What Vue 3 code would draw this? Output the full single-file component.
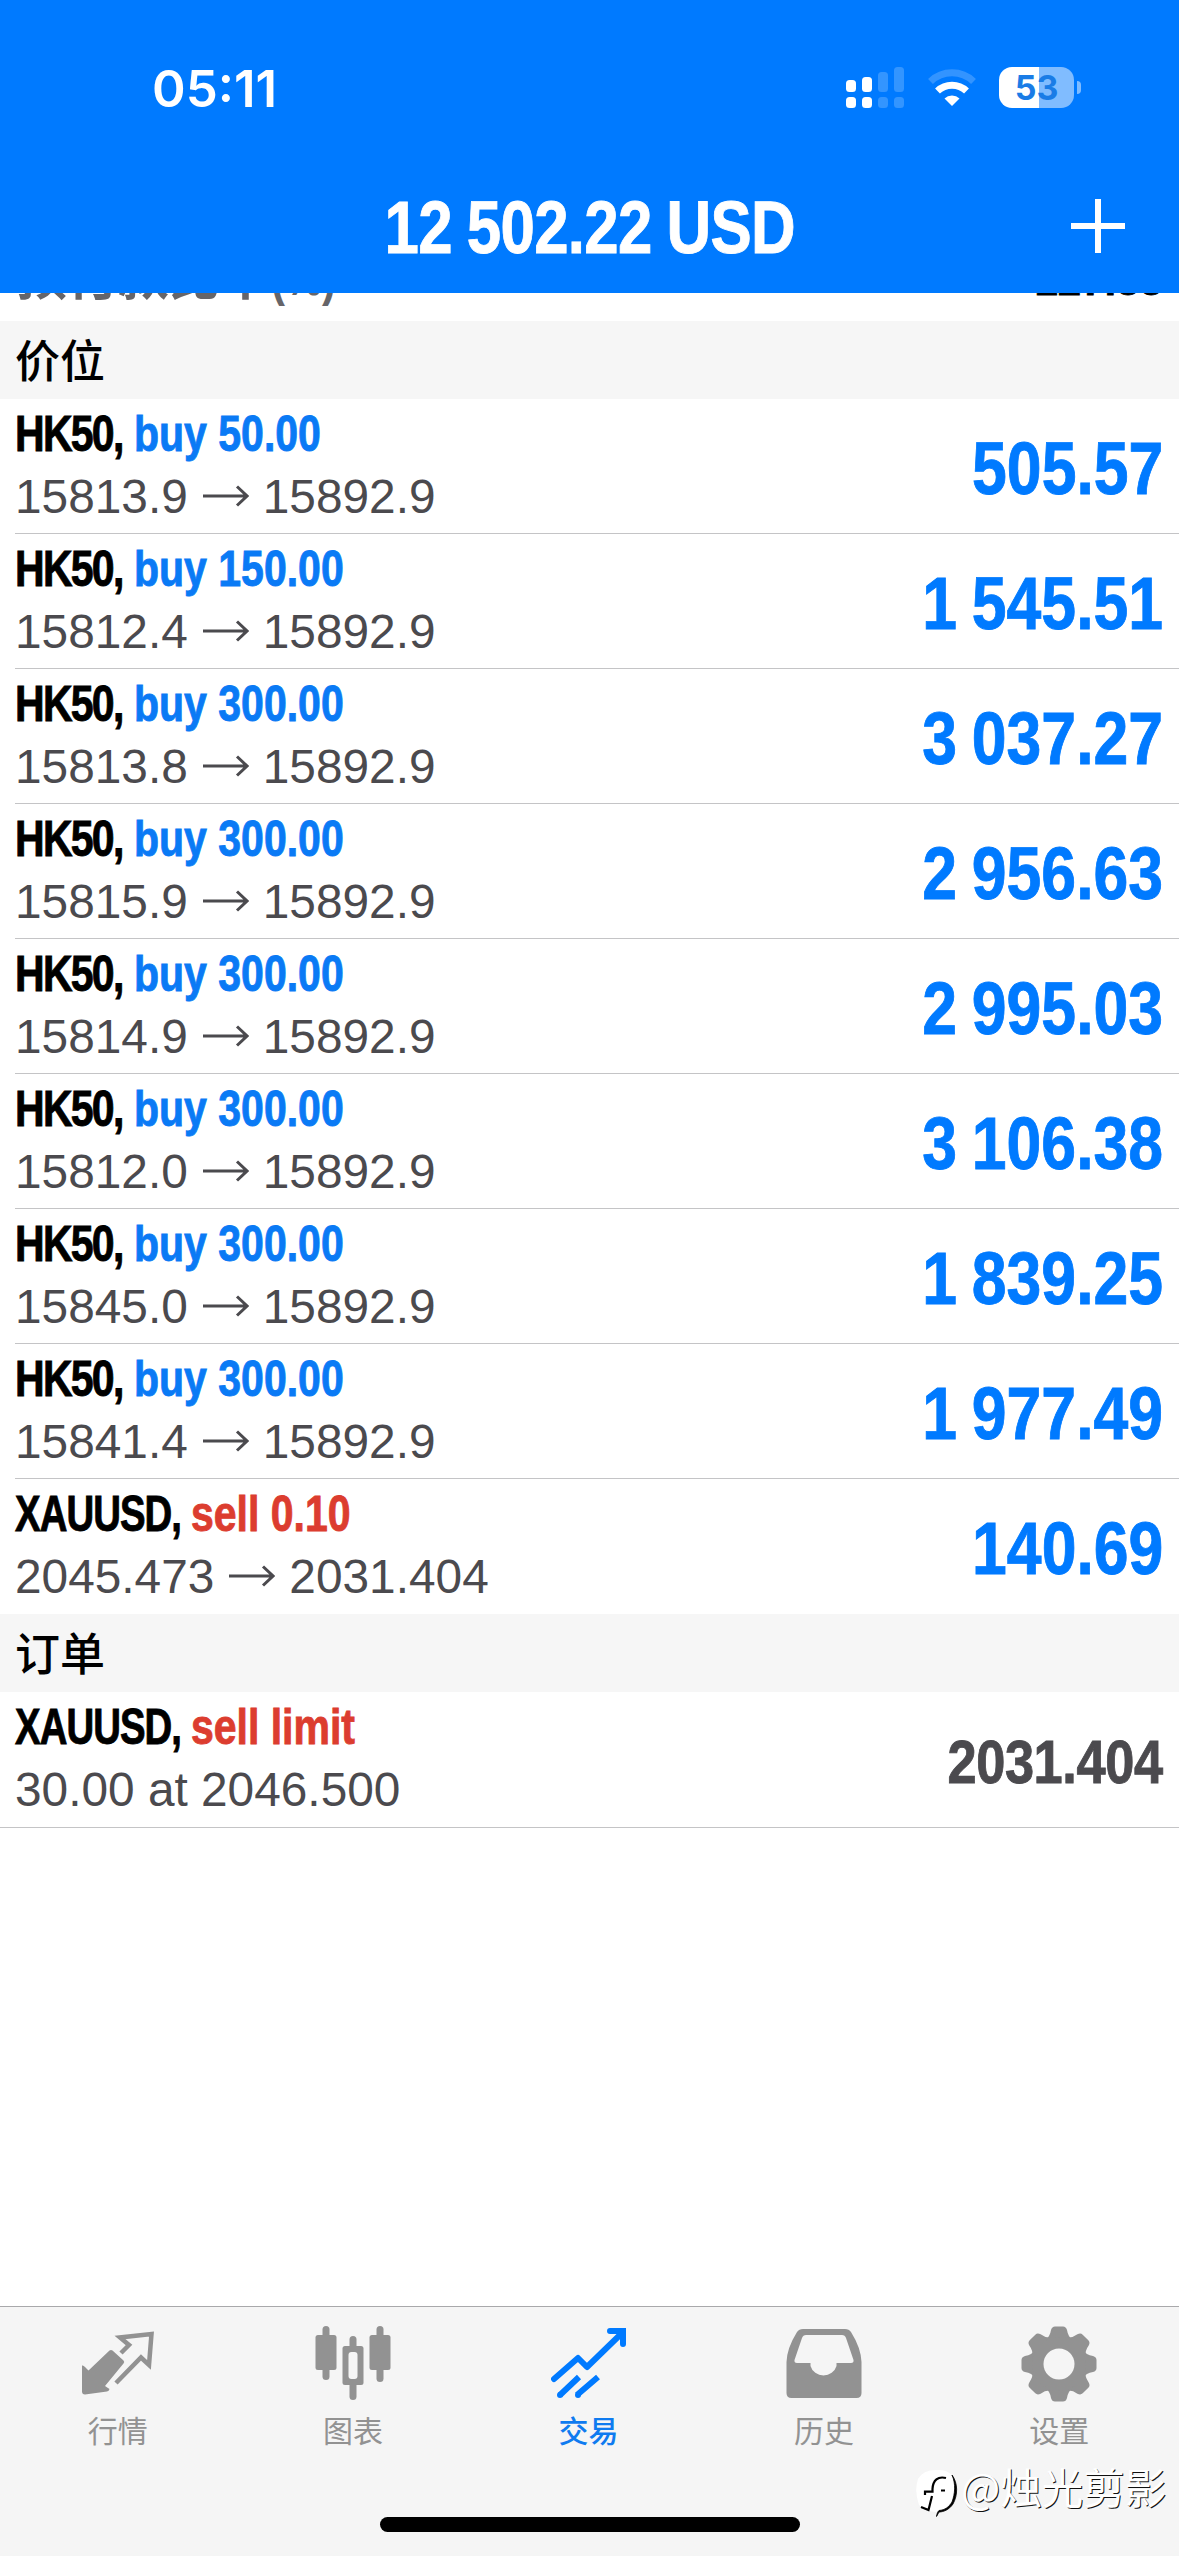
<script setup>
const positions = [
  { symbol: 'HK50,', side: 'buy', label: 'buy 50.00', from: '15813.9', to: '15892.9', value: '505.57' },
  { symbol: 'HK50,', side: 'buy', label: 'buy 150.00', from: '15812.4', to: '15892.9', value: '1 545.51' },
  { symbol: 'HK50,', side: 'buy', label: 'buy 300.00', from: '15813.8', to: '15892.9', value: '3 037.27' },
  { symbol: 'HK50,', side: 'buy', label: 'buy 300.00', from: '15815.9', to: '15892.9', value: '2 956.63' },
  { symbol: 'HK50,', side: 'buy', label: 'buy 300.00', from: '15814.9', to: '15892.9', value: '2 995.03' },
  { symbol: 'HK50,', side: 'buy', label: 'buy 300.00', from: '15812.0', to: '15892.9', value: '3 106.38' },
  { symbol: 'HK50,', side: 'buy', label: 'buy 300.00', from: '15845.0', to: '15892.9', value: '1 839.25' },
  { symbol: 'HK50,', side: 'buy', label: 'buy 300.00', from: '15841.4', to: '15892.9', value: '1 977.49' },
  { symbol: 'XAUUSD,', side: 'sell', label: 'sell 0.10', from: '2045.473', to: '2031.404', value: '140.69' },
]
const teeth = [0, 45, 90, 135, 180, 225, 270, 315]
</script>

<template>
  <div class="screen">
    <header class="header">
      <div class="status">
        <span class="time">05:11</span>
        <div class="indicators">
          <svg class="signal" width="58" height="42" viewBox="0 0 58 42" fill="#fff">
            <rect x="0" y="13" width="10" height="12" rx="3.5" />
            <rect x="0" y="30" width="10" height="11" rx="3.5" />
            <rect x="16" y="10" width="10" height="15" rx="3.5" />
            <rect x="16" y="30" width="10" height="11" rx="3.5" />
            <g opacity=".2">
              <rect x="32" y="5" width="10" height="20" rx="3.5" />
              <rect x="32" y="30" width="10" height="11" rx="3.5" />
              <rect x="48" y="0" width="10" height="25" rx="3.5" />
              <rect x="48" y="30" width="10" height="11" rx="3.5" />
            </g>
          </svg>
          <svg class="wifi" width="50" height="38" viewBox="0 0 50 38">
            <path d="M3.5 13.5A31 31 0 0 1 46.5 13.5" fill="none" stroke="#fff" stroke-width="7" opacity=".2" />
            <path d="M10.5 23A21 21 0 0 1 39.5 23" fill="none" stroke="#fff" stroke-width="7" />
            <path d="M17.5 30.5A11 11 0 0 1 32.5 30.5L25 38Z" fill="#fff" />
          </svg>
          <div class="battery"><span>53</span></div>
          <i class="cap"></i>
        </div>
      </div>
      <div class="nav">
        <h1 class="title cond">12 502.22 USD</h1>
        <svg class="plus" width="54" height="54" viewBox="0 0 54 54"><path d="M0 27H54M27 0V54" stroke="#fff" stroke-width="6" /></svg>
      </div>
    </header>

    <div class="peek">
      <div class="summary">
        <span class="summary-label">预付款比率<b>(%)</b></span>
        <span class="summary-value cond">127.83</span>
      </div>
    </div>

    <h2 class="section">价位</h2>
    <ul class="list">
      <li v-for="(p, i) in positions" :key="i" class="row">
        <div class="info">
          <div class="name cond"><b :class="{ long: p.symbol.length > 5 }">{{ p.symbol }}</b> <span :class="p.side">{{ p.label }}</span></div>
          <div class="detail">
            {{ p.from }}<svg class="arrow" width="46" height="24" viewBox="0 0 46 24"><path d="M0 12H44M34 2.5L44 12L34 21.5" fill="none" stroke="#4b4a4e" stroke-width="3" /></svg>{{ p.to }}
          </div>
        </div>
        <div class="value cond">{{ p.value }}</div>
      </li>
    </ul>

    <h2 class="section">订单</h2>
    <div class="row order">
      <div class="info">
        <div class="name cond"><b class="long">XAUUSD,</b> <span class="sell">sell limit</span></div>
        <div class="detail">30.00 at 2046.500</div>
      </div>
      <div class="value price cond">2031.404</div>
    </div>

    <div class="blank"></div>

    <nav class="tabs">
      <div class="tab">
        <svg width="76" height="76" viewBox="0 0 76 76">
          <path d="M29.5 24.5Q31 23.5 32.5 24.5L43.5 34.5Q45 36 43.5 37.5L25 60L29.5 63Q29 65 27 65.5L5 68.5Q2 68.5 2 65.5V39.5Q3.5 39 5 41L8.5 44.5Z" fill="#929292" />
          <path d="M41 27L49 19L40 11.5L71.5 8L69 39L61 31.5L36 57" fill="none" stroke="#929292" stroke-width="4.5" />
        </svg>
        <span>行情</span>
      </div>
      <div class="tab">
        <svg width="76" height="76" viewBox="0 0 76 76" fill="#929292">
          <rect x="7.5" y="0" width="7" height="54" rx="3.5" />
          <rect x="0.5" y="9" width="21" height="35" rx="2.5" />
          <rect x="34.5" y="10" width="7" height="64" rx="3.5" />
          <rect x="27.5" y="20" width="21" height="39" rx="2.5" />
          <rect x="33.5" y="26" width="9" height="27" rx="3" fill="#f5f5f5" />
          <rect x="61.5" y="0" width="7" height="56" rx="3.5" />
          <rect x="54.5" y="9" width="21" height="35" rx="2.5" />
        </svg>
        <span>图表</span>
      </div>
      <div class="tab active">
        <svg width="76" height="76" viewBox="0 0 76 76" fill="none" stroke="#007aff" stroke-width="6">
          <path d="M3 53L27 32L36 41L71 7" stroke-linecap="round" stroke-linejoin="round" />
          <path d="M59 5H72V18" stroke-linecap="round" />
          <path d="M9 69L28 51M26 69L47 51" />
          <circle cx="9" cy="69" r="3" fill="#007aff" stroke="none" />
          <circle cx="27" cy="69" r="3" fill="#007aff" stroke="none" />
        </svg>
        <span>交易</span>
      </div>
      <div class="tab">
        <svg width="76" height="76" viewBox="0 0 76 76">
          <path fill="#929292" fill-rule="evenodd" d="M17 3H59Q63 3 65 6Q75 22 75.5 36V67Q75.5 72 70.5 72H5.5Q0.5 72 0.5 67V36Q1 22 11 6Q13 3 17 3ZM20 9Q17 9 16 12L8.5 34Q8 37 11 37H24.5V40A13.5 13 0 0 0 50.5 40V37H65Q68 37 67.5 34L60 12Q59 9 56 9Z" />
        </svg>
        <span>历史</span>
      </div>
      <div class="tab">
        <svg width="76" height="76" viewBox="0 0 76 76">
          <g fill="#929292">
            <path v-for="a in teeth" :key="a" d="M24 14Q29 11 30 4Q31 0.5 34 0.5H42Q45 0.5 46 4Q47 11 52 14L44 34H32Z" :transform="`rotate(${a} 38 38)`" />
            <circle cx="38" cy="38" r="27" />
          </g>
          <circle cx="38" cy="38" r="15.5" fill="#f5f5f5" />
        </svg>
        <span>设置</span>
      </div>
      <div class="home"></div>
      <div class="mark">
        <svg width="45" height="50" viewBox="0 0 45 50">
          <path d="M20 1C34 0 41 8 40.5 21C40 34 33 42 20 43Q8 42 3 36Q-2 22 2 10Q7 1 20 1Z" fill="#fff" />
          <path d="M30 9C22 7 17 11 16.5 20V22.6H9V26M16 27L12.5 41L5 38M25 21.5H29" fill="none" stroke="#000" stroke-width="2.2" />
          <path d="M36 6C42 14 42 26 37 35C33 41 27 43 23 43L20.5 47.5C21 44 22 42.5 23 41.5C29 41 33 38 36 33C39 25 40 15 36 6Z" fill="#000" stroke="#000" stroke-width=".8" />
        </svg>
        <span>@烛光剪影</span>
      </div>
    </nav>
  </div>
</template>

<style>
body { margin: 0; }
</style>

<style scoped>
* { box-sizing: border-box; }
.screen {
  width: 1179px; height: 2556px; display: flex; flex-direction: column; overflow: hidden;
  background: #fff; color: #000; font-family: "Liberation Sans", "Noto Sans CJK SC", sans-serif;
}
.cond { font-family: "Liberation Sans", sans-serif; font-weight: 700; white-space: pre; -webkit-text-stroke: 0.9px currentColor; }
.header { height: 293px; background: #007aff; color: #fff; display: flex; flex-direction: column; flex: none; }
.status { height: 160px; display: flex; justify-content: space-between; padding: 0 98px 0 152px; }
.time { font: 600 51px/60px Inter, sans-serif; margin-top: 59px; }
.indicators { display: flex; margin-top: 67px; align-items: flex-start; }
.wifi { margin: 1px 0 0 23px; }
.battery {
  width: 75px; height: 41px; border-radius: 13px; margin-left: 22px;
  background: linear-gradient(90deg, #fff 40px, #80bcff 40px);
  color: #1a7ce6; font: 700 34px/42px Inter, sans-serif; text-align: center;
}
.cap { width: 4px; height: 13px; margin: 14px 0 0 3px; background: #80bcff; border-radius: 0 6px 6px 0; }
.nav { height: 133px; position: relative; display: flex; justify-content: center; }
.title { margin: 26px 0 0; font-size: 74px; line-height: 84px; letter-spacing: -0.8px; word-spacing: -2px; transform: scaleX(.835); }
.plus { position: absolute; right: 54px; top: 39px; }
.peek { height: 28px; overflow: hidden; display: flex; align-items: flex-end; flex: none; }
.summary { width: 100%; height: 73px; display: flex; justify-content: space-between; padding: 0 16px; }
.summary-label { font: 700 51px/60px "Liberation Sans", "Noto Sans CJK SC", sans-serif; color: #666569; }
.summary-label b { display: inline-block; transform: scaleX(.82); transform-origin: left; }
.summary-value { font-size: 50px; line-height: 60px; transform: scaleX(.84); transform-origin: right; }
.section {
  height: 78px; flex: none; margin: 0; padding-left: 15px; background: #f6f6f6;
  font: 500 45px/76px "Noto Sans CJK SC", sans-serif;
}
.list { margin: 0; padding: 0; list-style: none; flex: none; }
.row { height: 135px; display: flex; justify-content: space-between; margin-left: 15px; padding-right: 16px; border-bottom: 1px solid #c4c4c6; flex: none; }
.row:last-child { border-bottom: 0; }
.row.order { height: 136px; margin-left: 0; padding-left: 15px; border-bottom: 1px solid #c4c4c6; }
.name { font-size: 50px; line-height: 58px; margin-top: 6px; transform: scaleX(.82); transform-origin: left; }
.name b { letter-spacing: -2.1px; }
.name b.long { display: inline-block; letter-spacing: -1.2px; transform: scaleX(.935); transform-origin: left; margin-right: -16px; }
.buy { color: #0a7af5; }
.sell { color: #dc3d2f; }
.detail { font-size: 47.8px; line-height: 56px; margin-top: 6px; color: #4b4a4e; white-space: nowrap; }
.arrow { margin: 0 14px 0 15px; vertical-align: 5px; }
.value { font-size: 74px; line-height: 84px; margin-top: 28px; color: #007aff; word-spacing: -3px; transform: scaleX(.845); transform-origin: right; }
.price { font-size: 62px; line-height: 72px; margin-top: 34px; letter-spacing: -0.5px; color: #4b4a4e; }
.blank { flex: 1; }
.tabs { height: 250px; flex: none; position: relative; display: flex; padding-right: 2px; background: #f5f5f5; border-top: 1px solid #a9a9ab; }
.tab { flex: 1; display: flex; flex-direction: column; align-items: center; padding-top: 19px; color: #929292; font: 400 30px/36px "Noto Sans CJK SC", sans-serif; }
.tab span { margin-top: 9px; }
.tab.active { color: #0f7bf0; font-weight: 500; }
.home { position: absolute; left: 380px; top: 210px; width: 420px; height: 15px; border-radius: 8px; background: #000; }
.mark { position: absolute; left: 916px; top: 162px; display: flex; color: #fff; font: 400 41.5px/46px "Noto Sans CJK SC", sans-serif; text-shadow: 1px 1px 0 #111; white-space: nowrap; }
.mark span { margin-top: -6px; }
</style>
